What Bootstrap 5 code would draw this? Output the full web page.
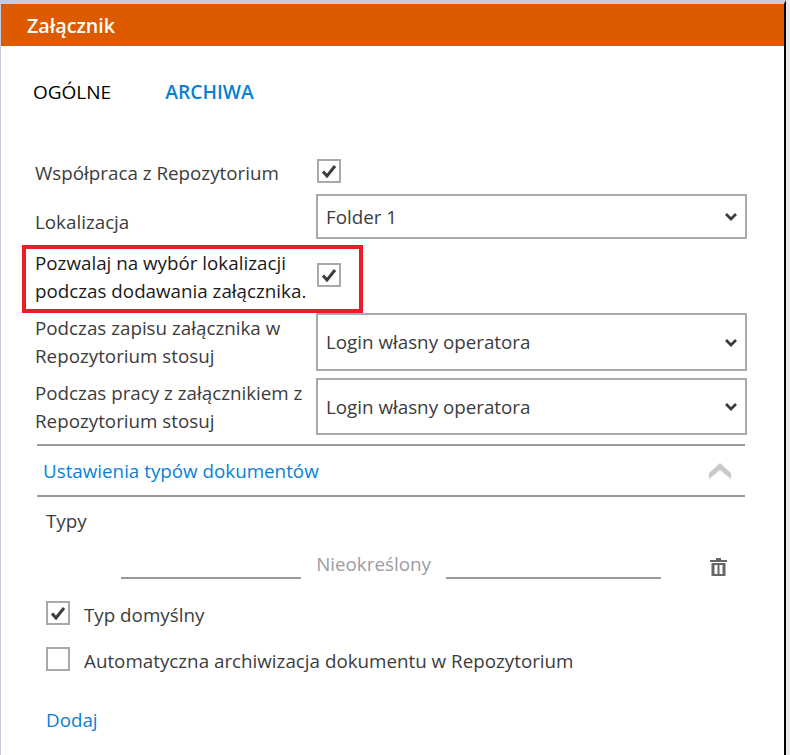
<!DOCTYPE html>
<html lang="pl">
<head>
<meta charset="utf-8">
<title>Załącznik</title>
<link href="https://cdn.jsdelivr.net/npm/bootstrap@5.3.0/dist/css/bootstrap.min.css" rel="stylesheet">
<style>
html,body{height:755px;overflow:hidden;background:#e9e9ec;}
body{font-family:"Open Sans","Liberation Sans",sans-serif;font-size:18.8px;color:#3c3c3c;line-height:28px;}
.shell{width:786px;height:755px;border-top:4px solid #c9cbdc;border-left:1px solid #c9cbdc;border-right:2px solid #000;background:#fff;overflow:hidden;}
.titlebar{height:42px;background:#dd5a00;color:#fff;font-weight:600;font-size:19.7px;padding:2px 0 0 26px;}
.tabs{height:92px;padding:32px 0 0 32px;gap:54px;color:#000;font-size:19px;}
.tab-on{color:#0a7fd4;font-weight:600;font-size:19.3px;}
.form-area{padding:16px 0 0 34px;}
.frow{width:712px;}
.lab{width:281px;flex:none;}
.chk{width:24px;height:24px;border:2px solid #a8a8ae;flex:none;background:#fff;}
.chk-in{margin-left:1px;}
.sel{width:431px;border:2px solid #a8a8ae;padding:0 8px;flex:none;}
.r1{height:34px;}
.r2{height:45px;margin-top:6px;}
.r2 .sel{height:45px;}
.r2 .lab{padding-top:10px;}
.r3{height:68px;margin-top:6px;position:relative;}
.r3 .lab{color:#1a1a1a;margin-top:-4px;line-height:28px;}
.r3 .chk{margin-top:-8px;}
.r1 .lab{padding-top:4px;}
.r4{height:58px;}
.r5{height:57px;margin-top:7px;}
.r4 .sel,.r5 .sel{height:100%;}
.hilite{position:absolute;left:-13px;top:0;width:341px;height:68px;border:4px solid #ed1c24;pointer-events:none;}
.section{margin:9px 0 0 2px;width:708px;height:53px;border-top:2px solid #999;border-bottom:2px solid #999;padding:0 14px 0 6px;color:#0a7fd4;}
.uline{height:2px;background:#999;flex:none;}
.sub{padding-left:11px;}
.typy{height:44px;padding-top:10px;}
.trow{height:38px;margin-top:0;}
.ul-a{width:180px;margin-left:86px;}
.ul-b{width:215px;}
.ghost{color:#9c9ca2;width:145px;text-align:center;flex:none;padding-bottom:1px;}
.trash{margin:0 0 3px 49px;}
.c1{height:46px;margin-top:11px;}
.c2{height:46px;}
.c1,.c2{gap:14px;}
.c1 span+span,.c2 span+span{padding-top:4px;}
.blue{color:#0a7fd4;}
.dodaj{margin-top:24px;}
</style>
</head>
<body>
<div class="shell">
  <div class="titlebar d-flex align-items-center">Załącznik</div>
  <div class="tabs d-flex"><span>OGÓLNE</span><span class="tab-on">ARCHIWA</span></div>
  <div class="form-area">
    <div class="frow r1 d-flex align-items-center"><div class="lab">Współpraca z Repozytorium</div><span class="chk chk-in d-flex align-items-center justify-content-center"><svg width="16" height="14" viewBox="0 0 16 14"><path d="M2 7.5 6 12 14 2" fill="none" stroke="#3c3c3c" stroke-width="3"/></svg></span></div>
    <div class="frow r2 d-flex align-items-center"><div class="lab">Lokalizacja</div><div class="sel d-flex align-items-center justify-content-between"><span>Folder 1</span><svg width="12" height="9" viewBox="0 0 12 9"><path d="M1 2 6 7 11 2" fill="none" stroke="#3c3c3c" stroke-width="2.8"/></svg></div></div>
    <div class="frow r3 d-flex align-items-center"><div class="lab">Pozwalaj na wybór lokalizacji podczas dodawania załącznika.</div><span class="chk chk-in d-flex align-items-center justify-content-center"><svg width="16" height="14" viewBox="0 0 16 14"><path d="M2 7.5 6 12 14 2" fill="none" stroke="#3c3c3c" stroke-width="3"/></svg></span><div class="hilite"></div></div>
    <div class="frow r4 d-flex align-items-center"><div class="lab">Podczas zapisu załącznika w Repozytorium stosuj</div><div class="sel d-flex align-items-center justify-content-between"><span>Login własny operatora</span><svg width="12" height="9" viewBox="0 0 12 9"><path d="M1 2 6 7 11 2" fill="none" stroke="#3c3c3c" stroke-width="2.8"/></svg></div></div>
    <div class="frow r5 d-flex align-items-center"><div class="lab">Podczas pracy z załącznikiem z Repozytorium stosuj</div><div class="sel d-flex align-items-center justify-content-between"><span>Login własny operatora</span><svg width="12" height="9" viewBox="0 0 12 9"><path d="M1 2 6 7 11 2" fill="none" stroke="#3c3c3c" stroke-width="2.8"/></svg></div></div>
    <div class="section d-flex align-items-center justify-content-between"><span>Ustawienia typów dokumentów</span><svg width="22" height="16" viewBox="0 0 22 16"><path d="M0 16V10L11 0 22 10V16L11 7Z" fill="#c9c9c9"/></svg></div>
    <div class="sub typy">Typy</div>
    <div class="trow d-flex align-items-end">
      <div class="uline ul-a"></div>
      <span class="ghost">Nieokreślony</span>
      <div class="uline ul-b"></div>
      <svg class="trash" width="17" height="18" viewBox="0 0 17 18"><path d="M6 0h5v2h6v2H0V2h6zM1.500 5h14v13h-14zM4.500 7v9h3V7zM9.500 7v9h3V7z" fill="#666" fill-rule="evenodd"/></svg>
    </div>
    <div class="sub c1 d-flex align-items-center"><span class="chk d-flex align-items-center justify-content-center"><svg width="16" height="14" viewBox="0 0 16 14"><path d="M2 7.5 6 12 14 2" fill="none" stroke="#3c3c3c" stroke-width="3"/></svg></span><span>Typ domyślny</span></div>
    <div class="sub c2 d-flex align-items-center"><span class="chk"></span><span>Automatyczna archiwizacja dokumentu w Repozytorium</span></div>
    <div class="sub blue dodaj">Dodaj</div>
  </div>
</div>
<script src="https://cdn.jsdelivr.net/npm/bootstrap@5.3.0/dist/js/bootstrap.bundle.min.js"></script>
</body>
</html>
